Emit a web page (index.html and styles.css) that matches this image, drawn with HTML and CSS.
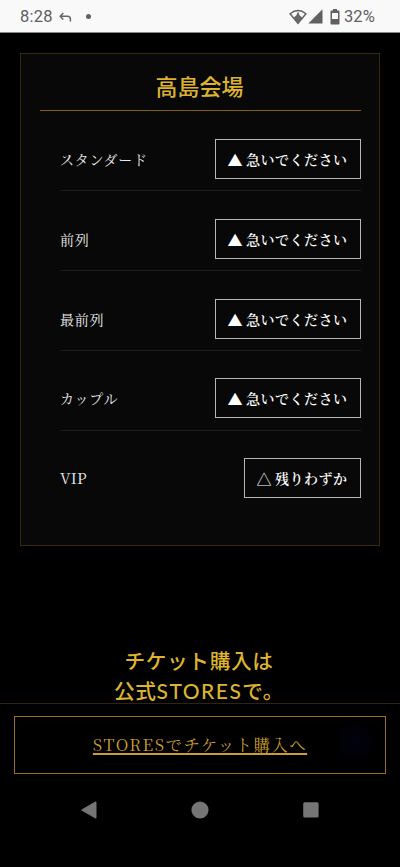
FILE: index.html
```html
<!DOCTYPE html>
<html lang="ja">
<head>
<meta charset="utf-8">
<title>高島会場</title>
<link rel="stylesheet" href="styles.css">
</head>
<body>
<div class="screen">
  <header class="status">
    <span class="time">8:28</span>
    <svg class="reply" width="13" height="11" viewBox="0 0 13 11"><path d="M4.3 1 L1.2 4.2 L4.3 7.4 M1.2 4.2 H8.5 Q11.4 4.2 11.4 7 V9.6" fill="none" stroke="#666" stroke-width="1.5"/></svg>
    <span class="dot"></span>
    <svg class="wifi" width="18" height="16" viewBox="0 0 18 16"><path d="M1.1 4.8 Q9 -1.7 16.9 4.8 L9 14.4 Z" fill="none" stroke="#606060" stroke-width="1.4"/><path d="M9 2.2 L10.6 6.2 L13.4 8.8 L9 14.5 L4.6 8.8 L7.4 6.2 Z" fill="#686868"/></svg>
    <svg class="signal" width="15" height="15" viewBox="0 0 15 15"><path d="M14.5 .3 V14.5 H.3 Z" fill="#606060"/></svg>
    <svg class="battery" width="10" height="16" viewBox="0 0 10 16"><path d="M3 0 H7 V1.5 H8.6 Q9.5 1.5 9.5 2.4 V14.6 Q9.5 15.5 8.6 15.5 H1.4 Q.5 15.5 .5 14.6 V2.4 Q.5 1.5 1.4 1.5 H3 Z M2 4 V10 H8 V4 Z" fill="#606060" fill-rule="evenodd"/></svg>
    <span class="percent">32%</span>
  </header>
  <main class="content">
    <section class="card">
      <h2 class="venue">高島会場</h2>
      <ul class="seats">
        <li class="seat"><span class="label">スタンダード</span><span class="tag"><span class="mark">▲</span>急いでください</span></li>
        <li class="seat"><span class="label">前列</span><span class="tag"><span class="mark">▲</span>急いでください</span></li>
        <li class="seat"><span class="label">最前列</span><span class="tag"><span class="mark">▲</span>急いでください</span></li>
        <li class="seat"><span class="label">カップル</span><span class="tag"><span class="mark">▲</span>急いでください</span></li>
        <li class="seat"><span class="label latin">VIP</span><span class="tag"><span class="mark">△</span>残りわずか</span></li>
      </ul>
    </section>
    <h2 class="lead">チケット購入は<br>公式<span class="brand">STORES</span>で。</h2>
  </main>
  <footer class="buy">
    <a class="cta"><span class="cta-text">STORESでチケット購入へ</span></a>
  </footer>
  <nav class="nav">
    <svg width="16" height="18" viewBox="0 0 16 18"><path d="M14.5 1.5 V16.5 L1.5 9 Z" fill="#757575" stroke="#757575" stroke-width="2" stroke-linejoin="round"/></svg>
    <svg width="18" height="18" viewBox="0 0 18 18"><circle cx="9" cy="9" r="8.6" fill="#757575"/></svg>
    <svg width="16" height="16" viewBox="0 0 16 16"><rect x=".2" y=".2" width="15.4" height="15.4" rx="1.5" fill="#757575"/></svg>
  </nav>
</div>
</body>
</html>
```
FILE: styles.css
```css
* { box-sizing: border-box; }
body { margin: 0; background: #000; }
.screen {
  width: 400px;
  height: 867px;
  display: flex;
  flex-direction: column;
  overflow: hidden;
  background: #000;
  font-family: "Noto Serif CJK JP", "Noto Serif JP", "Noto Sans CJK JP", serif;
}
.status {
  flex: none;
  height: 33px;
  padding: 1px 25px 0 20px;
  display: flex;
  align-items: center;
  background: #f9f9f9;
  border-bottom: 1px solid #8a8a8a;
  color: #606060;
  font: 400 16.5px/31px Roboto, sans-serif;
}
.time { width: 39px; letter-spacing: .25px; }
.reply { margin-top: 1px; }
.dot { width: 5px; height: 5px; margin-left: 14px; border-radius: 50%; background: #606060; }
.wifi { margin-left: auto; }
.signal { margin: 0 7px 0 1px; }
.battery { margin-right: 4px; }
.percent { width: 31px; white-space: nowrap; letter-spacing: .1px; }
.content { flex: none; height: 670px; padding: 20px 20px 0; }
.card {
  height: 493px;
  padding: 0 18px 0 19px;
  border: 1px solid #37290c;
  background: #080808;
}
.venue {
  height: 57px;
  margin: 0;
  padding: 15px 2px 0 0;
  border-bottom: 1.5px solid #806117;
  color: #ddb32f;
  font: 500 22px/32px "Noto Sans CJK JP", sans-serif;
  text-align: center;
}
.seats { margin: 0; padding: .7px 0 0 20px; list-style: none; }
.seat {
  height: 79.75px;
  padding: 27.3px 0 11.4px;
  display: flex;
  justify-content: space-between;
  align-items: center;
  border-bottom: 1px solid #1c1c1c;
  color: #eee;
}
.seat:last-child { border-color: transparent; }
.label { font-size: 14px; line-height: 20px; letter-spacing: .7px; }
.latin { font-size: 15px; letter-spacing: .1px; }
.tag {
  height: 40px;
  padding: 0 12.5px 0 12px;
  display: flex;
  align-items: center;
  border: 1px solid #b5b5b5;
  color: #fff;
  font-size: 14px;
  font-weight: 600;
  letter-spacing: .5px;
  white-space: nowrap;
}
.mark { margin-right: 2.9px; margin-left: -.8px; font-family: "Noto Sans CJK JP", sans-serif; font-size: 15.1px; font-weight: 400; }
.lead {
  margin: 99px 0 0;
  padding-right: 2px;
  color: #ddb32f;
  font: 500 20.7px/30px "Noto Sans CJK JP", sans-serif;
  letter-spacing: .6px;
  text-align: center;
}
.brand { font-family: Lato, sans-serif; font-size: 21px; font-weight: 500; line-height: 1; letter-spacing: 1.5px; }
.buy {
  flex: none;
  height: 84px;
  padding: 12px 14px 0;
  border-top: 1px solid #302409;
  background: #000;
}
.cta {
  height: 58px;
  padding-bottom: 2px;
  display: flex;
  align-items: center;
  justify-content: center;
  border: 1px solid #94731c;
  background: radial-gradient(circle at 340px 24px, #02020f 0, #010108 12px, transparent 24px);
}
.cta-text {
  color: #ca9e2a;
  font-size: 16.4px;
  line-height: 24px;
  letter-spacing: 1.5px;
  text-decoration: underline;
  text-decoration-thickness: 1.5px;
  text-underline-offset: 2px;
  text-decoration-skip-ink: none;
}
.nav {
  flex: none;
  height: 46px;
  padding: 0 81px;
  display: flex;
  align-items: center;
  justify-content: space-between;
}
```
